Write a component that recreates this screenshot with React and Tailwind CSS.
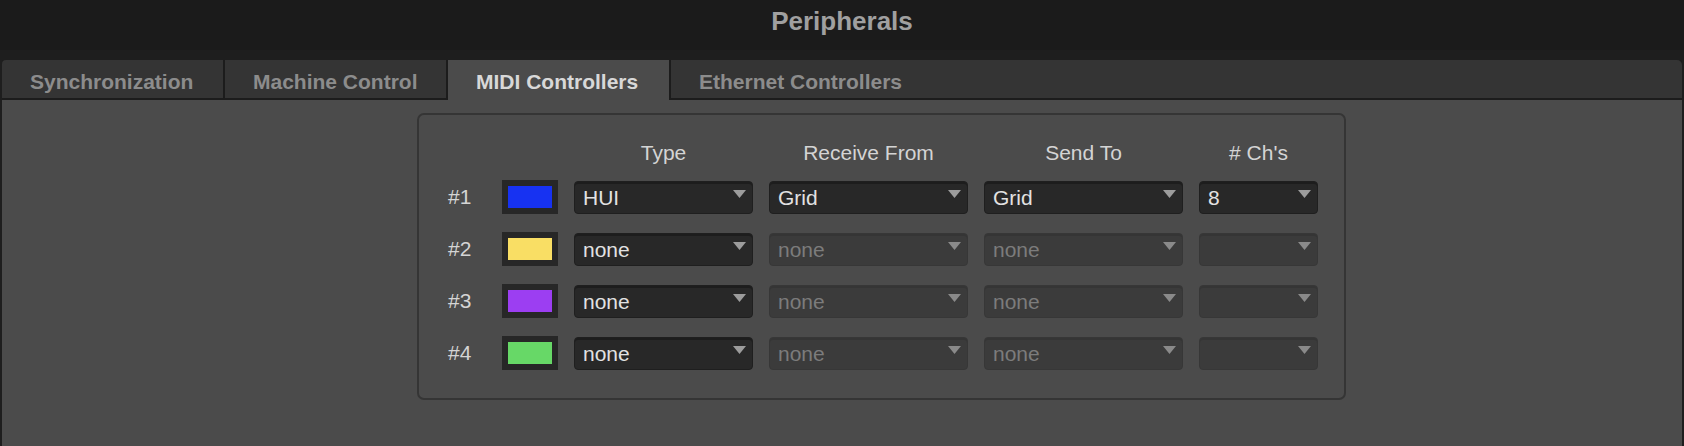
const tabs = ['Synchronization', 'Machine Control', 'MIDI Controllers', 'Ethernet Controllers'];

const rows = [
  { id: '#1', color: 'bg-[#1732f2]', type: 'HUI', from: 'Grid', to: 'Grid', ch: '8', on: true },
  { id: '#2', color: 'bg-[#f9de64]', type: 'none', from: 'none', to: 'none', ch: '', on: false },
  { id: '#3', color: 'bg-[#9c3ef2]', type: 'none', from: 'none', to: 'none', ch: '', on: false },
  { id: '#4', color: 'bg-[#67d867]', type: 'none', from: 'none', to: 'none', ch: '', on: false },
];

function Arrow({ on }) {
  return (
    <svg width="13" height="8" viewBox="0 0 13 8" className="absolute right-[6px] top-[8px]">
      <polygon points="0,0 13,0 6.5,8" fill={on ? '#9c9c9c' : '#8a8a8a'} />
    </svg>
  );
}

function Select({ value, on, width }) {
  return (
    <div
      className={
        'relative h-[33px] shrink-0 rounded-[4px] pl-[8px] pt-[4px] leading-[24px] ' +
        width +
        (on
          ? ' bg-[#282828] border border-[#1f1f1f] shadow-[inset_0_2px_0_#1d1d1d] text-[#e2e2e2]'
          : ' bg-[#3b3b3b] border border-[#373737] shadow-[inset_0_2px_0_#353535] text-[#7c7c7c]')
      }
    >
      {value}
      <Arrow on={on} />
    </div>
  );
}

export default function App() {
  return (
    <div className="h-[446px] w-[1684px] overflow-hidden bg-[#1e1e1e] text-[21px]" style={{ fontFamily: '"Liberation Sans", Arial, sans-serif' }}>
      <div className="h-[50px] bg-[#1b1b1b] pt-[6px] text-center text-[26px] font-bold leading-[30px] text-[#a0a0a0]">
        Peripherals
      </div>
      <div className="px-[2px] pt-[10px]">
        <div className="flex gap-[2px] bg-[#1c1c1c] pb-[2px]">
          {tabs.map((t, i) => {
            const active = i === 2;
            const last = i === tabs.length - 1;
            return (
              <div
                key={t}
                className={
                  'h-[38px] pl-[28px] pt-[10px] font-bold leading-[24px] ' +
                  (last ? 'flex-1 rounded-tr-[5px] ' : 'w-[221px] ') +
                  (i === 0 ? 'rounded-tl-[4px] ' : '') +
                  (active ? 'bg-[#4b4b4b] text-[#d8d8d8] -mb-[2px] h-[40px]' : 'bg-[#343434] text-[#8c8c8c]')
                }
              >
                {t}
              </div>
            );
          })}
        </div>
        <div className="h-[346px] bg-[#4b4b4b] pl-[415px] pt-[13px]">
          <div className="w-[929px] rounded-[7px] border-2 border-[#353535] pl-[29px] pt-[26px] pb-[28px]">
            <div className="mb-[15px] flex gap-[16px] leading-[24px] text-[#d4d4d4]">
              <div className="w-[38px] shrink-0" />
              <div className="w-[56px] shrink-0" />
              <div className="w-[179px] shrink-0 text-center">Type</div>
              <div className="w-[199px] shrink-0 text-center">Receive From</div>
              <div className="w-[199px] shrink-0 text-center">Send To</div>
              <div className="w-[119px] shrink-0 text-center"># Ch's</div>
            </div>
            <div className="flex flex-col gap-[18px]">
              {rows.map((r) => (
                <div key={r.id} className="flex items-center gap-[16px]">
                  <div className="w-[38px] shrink-0 leading-[24px] text-[#d4d4d4]">{r.id}</div>
                  <div className="flex h-[34px] w-[56px] shrink-0 items-center justify-center bg-[#272727]">
                    <div className={'h-[22px] w-[44px] ' + r.color} />
                  </div>
                  <Select value={r.type} on width="w-[179px]" />
                  <Select value={r.from} on={r.on} width="w-[199px]" />
                  <Select value={r.to} on={r.on} width="w-[199px]" />
                  <Select value={r.ch} on={r.on} width="w-[119px]" />
                </div>
              ))}
            </div>
          </div>
        </div>
      </div>
    </div>
  );
}
